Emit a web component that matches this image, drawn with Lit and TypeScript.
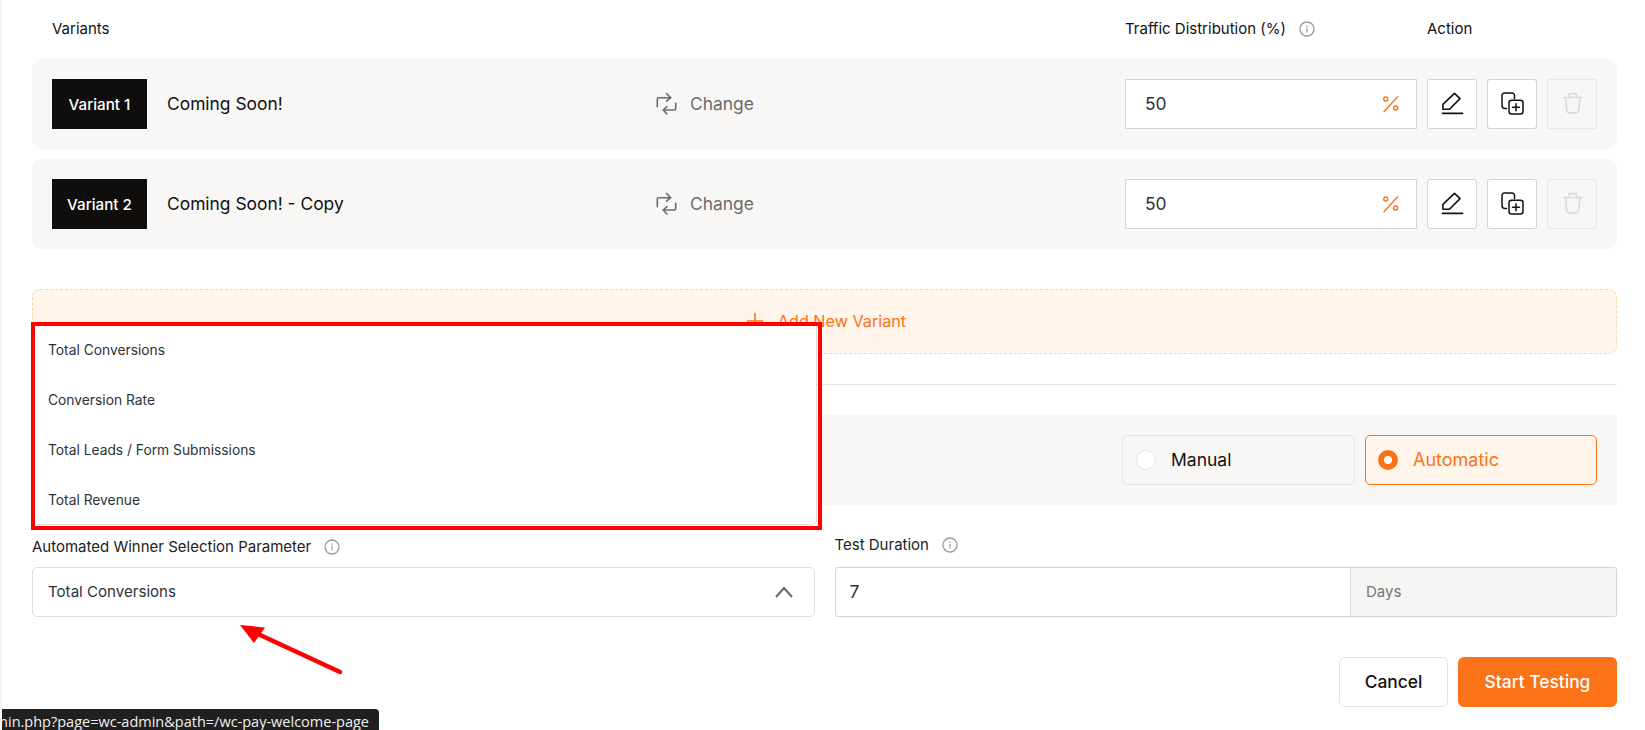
import { LitElement, html, css, svg } from "lit";
import { customElement } from "lit/decorators.js";

const info = html`<svg class="info" width="16" height="16" viewBox="0 0 16 16" fill="none">
  <circle cx="8" cy="8" r="7" stroke="#9a9a9a" stroke-width="1.3"/>
  <path d="M8 7.4v3.6" stroke="#9a9a9a" stroke-width="1.2" stroke-linecap="round"/>
  <circle cx="8" cy="5.2" r=".8" fill="#9a9a9a"/>
</svg>`;

const swap = html`<svg width="24" height="24" viewBox="0 0 24 24" fill="none" stroke="#6b6b6b" stroke-width="1.6" stroke-linecap="round" stroke-linejoin="round">
  <path d="M3.3 14.7V7a1.3 1.3 0 0 1 1.3-1.3h12"/><path d="M12.6 1.6l4.1 4.1-4.1 3.5"/>
  <path d="M21.7 11.3V16.700a1.300 1.300 0 0 1-1.300 1.300H9.300"/><path d="M12.9 14.600L9.300 18l3.600 4"/>
</svg>`;

const percent = html`<svg width="20" height="20" viewBox="0 0 20 20" fill="none" stroke="#f97316" stroke-width="1.4" stroke-linecap="round">
  <circle cx="4.700" cy="5" r="2"/><circle cx="14.700" cy="14" r="2"/><path d="M3 17.700L16.700 2.700"/>
</svg>`;

const pencil = html`<svg width="24" height="24" viewBox="0 0 24 24" fill="none" stroke="#111" stroke-width="1.600" stroke-linecap="round" stroke-linejoin="round">
  <path d="M2.900 17.300V12.300L14.500 1.300L20 6.600L9.500 17.300Z"/><path d="M2.500 21.400H22.600"/>
</svg>`;

const copy = html`<svg width="24" height="24" viewBox="0 0 24 24" fill="none" stroke="#111" stroke-width="1.500" stroke-linecap="round" stroke-linejoin="round">
  <path d="M14.500 6.500V3.500a2.500 2.500 0 0 0-2.500-2.500H4.500A2.500 2.500 0 0 0 2 3.500V13.500a3 3 0 0 0 3 3h1.500"/>
  <rect x="9" y="8.300" width="14" height="13.800" rx="2.500"/><path d="M16 11.700v7M12.500 15.200h7"/>
</svg>`;

const trash = html`<svg width="24" height="24" viewBox="0 0 24 24" fill="none" stroke="#dcdcdc" stroke-width="1.700" stroke-linecap="round" stroke-linejoin="round">
  <path d="M3.500 5.500H22"/><path d="M8.500 5.500L9 2.500a1 1 0 0 1 1-.8h5.500a1 1 0 0 1 1 .8l.5 3"/>
  <path d="M5.700 5.500L6.700 18a3 3 0 0 0 3 2.800h6a3 3 0 0 0 3-2.800L20 5.500"/>
</svg>`;

const plus = html`<svg width="24" height="24" viewBox="0 0 24 24" fill="none" stroke="#f97316" stroke-width="1.600" stroke-linecap="round">
  <path d="M12 4.500v15M4.500 12h15"/>
</svg>`;

const chevron = html`<svg width="24" height="24" viewBox="0 0 24 24" fill="none" stroke="#666" stroke-width="2">
  <path d="M4 17L12 8L20 17"/>
</svg>`;

const arrow = svg`<path d="M340 672L258 634" stroke="#ff0000" stroke-width="4.500" stroke-linecap="round"/>
  <path d="M240 625L265 627.500L254 643Z" fill="#ff0000"/>`;

@customElement("app-root")
export class AppRoot extends LitElement {
  static styles = css`
    :host {
      display: block;
      position: relative;
      width: 1645px;
      height: 730px;
      overflow: hidden;
      box-sizing: border-box;
      padding: 0 28px 0 30px;
      background: #fff;
      border-left: 2px solid #f5f5f5;
      font-family: Inter, "Liberation Sans", sans-serif;
      color: #111;
    }
    * { box-sizing: border-box; }
    .grid {
      display: grid;
      grid-template-columns: 602px 471px 292px 180px;
      align-items: center;
      padding: 0 20px;
    }
    .head {
      height: 59px;
      font-size: 15px;
      line-height: 20px;
      padding-bottom: 1px;
    }
    .head .labeled { grid-column: 3; }
    .head .action { margin-left: 10px; }
    .labeled { display: flex; align-items: center; gap: 13px; }
    .info { flex: none; }
    .rows { display: flex; flex-direction: column; gap: 10px; }
    .row {
      height: 90px;
      background: #f8f7f5;
      border-radius: 10px;
    }
    .name { display: flex; align-items: center; gap: 20px; font-size: 17.400px; }
    .lift { padding-bottom: 2px; }
    .badge {
      width: 95px;
      height: 50px;
      background: #0f0e0c;
      color: #fff;
      font-size: 15.200px;
      font-weight: 500;
      display: flex;
      align-items: center;
      justify-content: center;
    }
    .change { display: flex; align-items: center; gap: 12px; color: #6b6b6b; font-size: 17.400px; }
    .pct {
      height: 50px;
      background: #fff;
      border: 1px solid #d4d4d4;
      display: flex;
      align-items: center;
      justify-content: space-between;
      padding: 0 15px 0 19px;
      font-size: 17.400px;
      color: #2c3338;
    }
    .actions { display: flex; gap: 10px; margin-left: 10px; }
    .ibtn {
      width: 50px;
      height: 50px;
      background: #fff;
      border: 1px solid #d4d4d4;
      border-radius: 3px;
      display: flex;
      align-items: center;
      justify-content: center;
    }
    .ibtn.off { background: #f8f7f5; border-color: #e6e6e6; }
    .add {
      margin-top: 40px;
      height: 65px;
      background: #fff5eb;
      border: 1px dashed #fbd9a8;
      border-radius: 8px;
      display: flex;
      align-items: center;
      justify-content: center;
      gap: 11px;
      color: #f97316;
      font-size: 16.200px;
      padding-bottom: 1px;
    }
    .divider { margin-top: 30px; height: 1px; background: #e5e5e5; }
    .panel {
      margin-top: 30px;
      height: 90px;
      background: #f8f7f5;
      padding: 20px;
      display: flex;
      justify-content: flex-end;
      gap: 10px;
    }
    .opt {
      width: 232px;
      height: 50px;
      border: 1px solid #e4e4e4;
      border-radius: 5px;
      display: flex;
      align-items: center;
      gap: 15px;
      padding-left: 13px;
      font-size: 17.500px;
    }
    .opt.first { width: 233px; }
    .opt.on { background: #fff5eb; border-color: #f97316; color: #f97316; padding-left: 12px; font-size: 18px; }
    .radio {
      width: 20px;
      height: 20px;
      border-radius: 50%;
      background: #fff;
      border: 1px solid #e4e4e4;
    }
    .on .radio { border: 6px solid #f97316; }
    .fields {
      margin-top: 30px;
      display: grid;
      grid-template-columns: 1fr 1fr;
      gap: 20px;
    }
    .field { position: relative; }
    .label {
      height: 21px;
      margin-bottom: 11px;
      padding-top: 2px;
      font-size: 15px;
      line-height: 20px;
      color: #222;
    }
    .label.t2 { padding-top: 0; padding-bottom: 2px; }
    .select {
      height: 50px;
      border: 1px solid #dedede;
      border-radius: 5px;
      display: flex;
      align-items: center;
      justify-content: space-between;
      padding: 0 18px 1px 15px;
      font-size: 15.100px;
      color: #2c3338;
    }
    .menu {
      position: absolute;
      left: 0;
      top: -210px;
      width: 785px;
      height: 200px;
      background: #fff;
      border: 1px solid #dedede;
      border-top: 0;
      border-radius: 0 0 5px 5px;
      font-size: 13.800px;
      color: #2c3338;
    }
    .menu div { height: 50px; display: flex; align-items: center; padding-left: 15px; }
    .duration {
      height: 50px;
      border: 1px solid #d4d4d4;
      border-radius: 3px;
      display: flex;
      font-size: 17.400px;
      color: #2c3338;
    }
    .duration .val { flex: 1; display: flex; align-items: center; padding-left: 14px; padding-bottom: 2px; }
    .duration .unit {
      width: 266px;
      background: #f5f5f3;
      border-left: 1px solid #d4d4d4;
      display: flex;
      align-items: center;
      padding-left: 15px;
      padding-bottom: 2px;
      font-size: 15px;
      color: #777;
    }
    .footer { margin-top: 40px; display: flex; justify-content: flex-end; gap: 10px; }
    .btn {
      height: 50px;
      border-radius: 6px;
      display: flex;
      align-items: center;
      justify-content: center;
      padding-bottom: 2px;
      font-size: 17.400px;
      font-weight: 500;
    }
    .cancel { width: 109px; background: #fff; border: 1px solid #e2e2e2; }
    .start { width: 159px; background: #fb7316; color: #fff; }
    .redbox {
      position: absolute;
      left: 29px;
      top: 322px;
      width: 791px;
      height: 208px;
      border: 4px solid #ff0000;
      pointer-events: none;
    }
    .arrow { position: absolute; left: -2px; top: 0; pointer-events: none; }
    .status {
      position: absolute;
      left: -2px;
      bottom: 0;
      width: 379px;
      height: 21px;
      background: #202020;
      border-radius: 0 4px 0 0;
      color: #f0f0f0;
      font-family: "Open Sans", "Liberation Sans", sans-serif;
      font-size: 14.500px;
      line-height: 21px;
      white-space: nowrap;
      overflow: hidden;
      display: flex;
      justify-content: flex-end;
      padding-right: 10px;
    }
    .status span { flex: none; padding-top: 2px; }
  `;

  private row(n: number, title: string) {
    return html`<div class="grid row">
      <div class="name"><div class="badge">Variant ${n}</div><span class="lift">${title}</span></div>
      <div class="change">${swap}<span class="lift">Change</span></div>
      <div class="pct"><span class="lift">50</span>${percent}</div>
      <div class="actions">
        <div class="ibtn">${pencil}</div>
        <div class="ibtn">${copy}</div>
        <div class="ibtn off">${trash}</div>
      </div>
    </div>`;
  }

  render() {
    return html`
      <div class="grid head">
        <div>Variants</div>
        <div></div>
        <div class="labeled">Traffic Distribution (%) ${info}</div>
        <div class="action">Action</div>
      </div>
      <div class="rows">
        ${this.row(1, "Coming Soon!")}
        ${this.row(2, "Coming Soon! - Copy")}
      </div>
      <div class="add">${plus}<span>Add New Variant</span></div>
      <div class="divider"></div>
      <div class="panel">
        <div class="opt first"><span class="radio"></span><span class="lift">Manual</span></div>
        <div class="opt on"><span class="radio"></span><span class="lift">Automatic</span></div>
      </div>
      <div class="fields">
        <div class="field">
          <div class="label labeled">Automated Winner Selection Parameter ${info}</div>
          <div class="select"><span>Total Conversions</span>${chevron}</div>
          <div class="menu">
            <div>Total Conversions</div>
            <div>Conversion Rate</div>
            <div>Total Leads / Form Submissions</div>
            <div>Total Revenue</div>
          </div>
        </div>
        <div class="field">
          <div class="label labeled t2">Test Duration ${info}</div>
          <div class="duration"><div class="val">7</div><div class="unit">Days</div></div>
        </div>
      </div>
      <div class="footer">
        <div class="btn cancel">Cancel</div>
        <div class="btn start">Start Testing</div>
      </div>
      <div class="redbox"></div>
      <svg class="arrow" width="1645" height="730" viewBox="0 0 1645 730" fill="none">${arrow}</svg>
      <div class="status"><span>/wp-admin/admin.php?page=wc-admin&amp;path=/wc-pay-welcome-page</span></div>
    `;
  }
}
